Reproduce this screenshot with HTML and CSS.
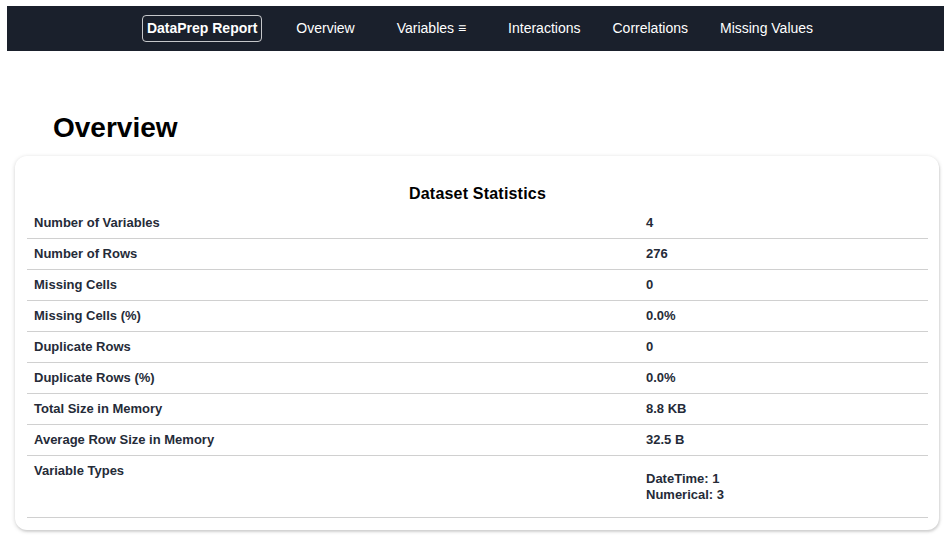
FILE: index.html
```html
<!DOCTYPE html>
<html lang="en">
<head>
<meta charset="utf-8">
<title>DataPrep Report</title>
<link rel="stylesheet" href="styles.css">
</head>
<body>
<nav class="navbar">
  <a class="nav-brand">DataPrep Report</a>
  <a class="nav-link nav-pad">Overview</a>
  <a class="nav-link nav-pad">Variables ≡</a>
  <a class="nav-link">Interactions</a>
  <a class="nav-link">Correlations</a>
  <a class="nav-link">Missing Values</a>
</nav>
<main class="main">
  <h1 class="section-title">Overview</h1>
  <section class="card">
    <table class="stats">
      <caption class="stats-caption">Dataset Statistics</caption>
      <tbody>
        <tr><th>Number of Variables</th><td>4</td></tr>
        <tr><th>Number of Rows</th><td>276</td></tr>
        <tr><th>Missing Cells</th><td>0</td></tr>
        <tr><th>Missing Cells (%)</th><td>0.0%</td></tr>
        <tr><th>Duplicate Rows</th><td>0</td></tr>
        <tr><th>Duplicate Rows (%)</th><td>0.0%</td></tr>
        <tr><th>Total Size in Memory</th><td>8.8 KB</td></tr>
        <tr><th>Average Row Size in Memory</th><td>32.5 B</td></tr>
        <tr class="types-row"><th>Variable Types</th><td class="types-cell">DateTime: 1<br>Numerical: 3</td></tr>
      </tbody>
    </table>
  </section>
</main>
</body>
</html>
```

FILE: styles.css
```css
html, body {
  margin: 0;
  padding: 0;
  background: #ffffff;
  font-family: "Liberation Sans", Arial, sans-serif;
}

.navbar {
  margin: 6px 0 0 7px;
  height: 45px;
  background: #1a202c;
  display: flex;
  align-items: center;
  justify-content: center;
  gap: 32px;
  padding-left: 4px;
}

.nav-brand {
  color: #ffffff;
  font-weight: bold;
  font-size: 14px;
  line-height: 17px;
  padding: 4px 4px;
  border: 1px solid rgba(255, 255, 255, 0.75);
  border-radius: 4px;
  margin-right: 2px;
}

.nav-link {
  color: #ffffff;
  font-size: 14px;
  line-height: 17px;
}

.nav-pad {
  margin-right: 10px;
}

.main {
  padding: 0 5px 20px 15px;
}

.section-title {
  margin: 61px 0 12px 38px;
  font-size: 28px;
  font-weight: bold;
  color: #000000;
  line-height: 32px;
}

.card {
  background: #ffffff;
  border-radius: 12px;
  box-shadow: 0 1px 4px rgba(0, 0, 0, 0.18), 1px 2px 2px rgba(0, 0, 0, 0.08);
  padding: 12px 11px 12px 12px;
}

.stats {
  width: 100%;
  border-collapse: collapse;
  color: #252b38;
  font-size: 13px;
  font-weight: bold;
}

.stats-caption {
  font-size: 16px;
  font-weight: bold;
  color: #000000;
  line-height: 18px;
  padding: 17px 0 5px;
  letter-spacing: 0.2px;
}

.stats th,
.stats td {
  text-align: left;
  padding: 8px 7px;
  line-height: 14px;
  border-bottom: 1px solid #d0d0d0;
  vertical-align: middle;
}

.stats th {
  width: 605px;
}

.stats td {
  padding-left: 0;
}

.stats .types-row th {
  vertical-align: top;
}

.stats .types-cell {
  line-height: 16px;
  padding-top: 15px;
  padding-bottom: 14px;
}
```
